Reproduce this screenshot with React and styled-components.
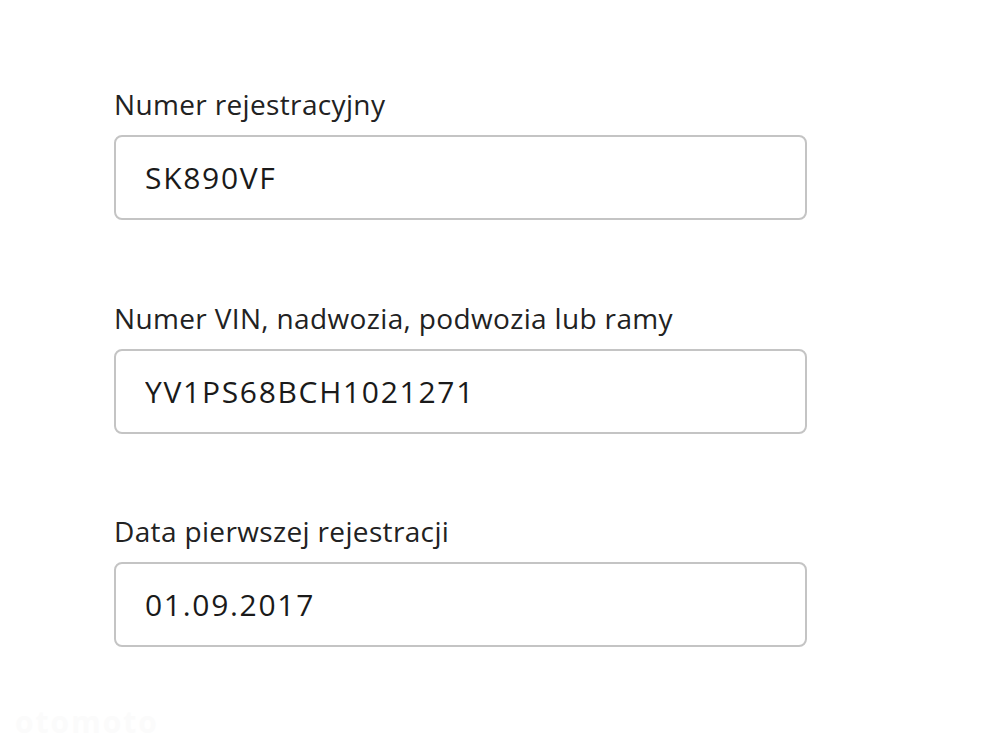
import React from "react";
import styled, { createGlobalStyle } from "styled-components";

const GlobalStyle = createGlobalStyle`
  html, body {
    margin: 0;
    padding: 0;
    background: #ffffff;
  }
  body {
    font-family: "Open Sans", "Noto Sans", "Liberation Sans", sans-serif;
    color: #222222;
  }
`;

const Page = styled.div`
  position: relative;
  width: 1000px;
  height: 750px;
  box-sizing: border-box;
  padding: 86px 0 0 114px;
  display: flex;
  flex-direction: column;
  gap: 79.5px;
  overflow: hidden;
`;

const Field = styled.div`
  display: flex;
  flex-direction: column;
  gap: 13px;
`;

const Label = styled.label`
  font-size: 28px;
  line-height: 36px;
  letter-spacing: 0.35px;
  color: #222222;
`;

const Input = styled.input`
  width: 693px;
  height: 85px;
  box-sizing: border-box;
  margin: 0;
  padding: 0 29px;
  border: 2px solid #c4c4c4;
  border-radius: 8px;
  background: #ffffff;
  font-family: inherit;
  font-size: 30px;
  line-height: 40px;
  letter-spacing: 1.7px;
  color: #1a1a1a;
  outline: none;
`;

const Watermark = styled.div`
  position: absolute;
  left: 15px;
  bottom: 8px;
  font-size: 30px;
  font-weight: 700;
  letter-spacing: 2px;
  color: #fbfbfb;
`;

const fields = [
  { label: "Numer rejestracyjny", value: "SK890VF" },
  { label: "Numer VIN, nadwozia, podwozia lub ramy", value: "YV1PS68BCH1021271" },
  { label: "Data pierwszej rejestracji", value: "01.09.2017" },
];

export default function App() {
  return (
    <>
      <GlobalStyle />
      <Page>
        {fields.map((f) => (
          <Field key={f.label}>
            <Label>{f.label}</Label>
            <Input readOnly value={f.value} />
          </Field>
        ))}
        <Watermark>otomoto</Watermark>
      </Page>
    </>
  );
}
